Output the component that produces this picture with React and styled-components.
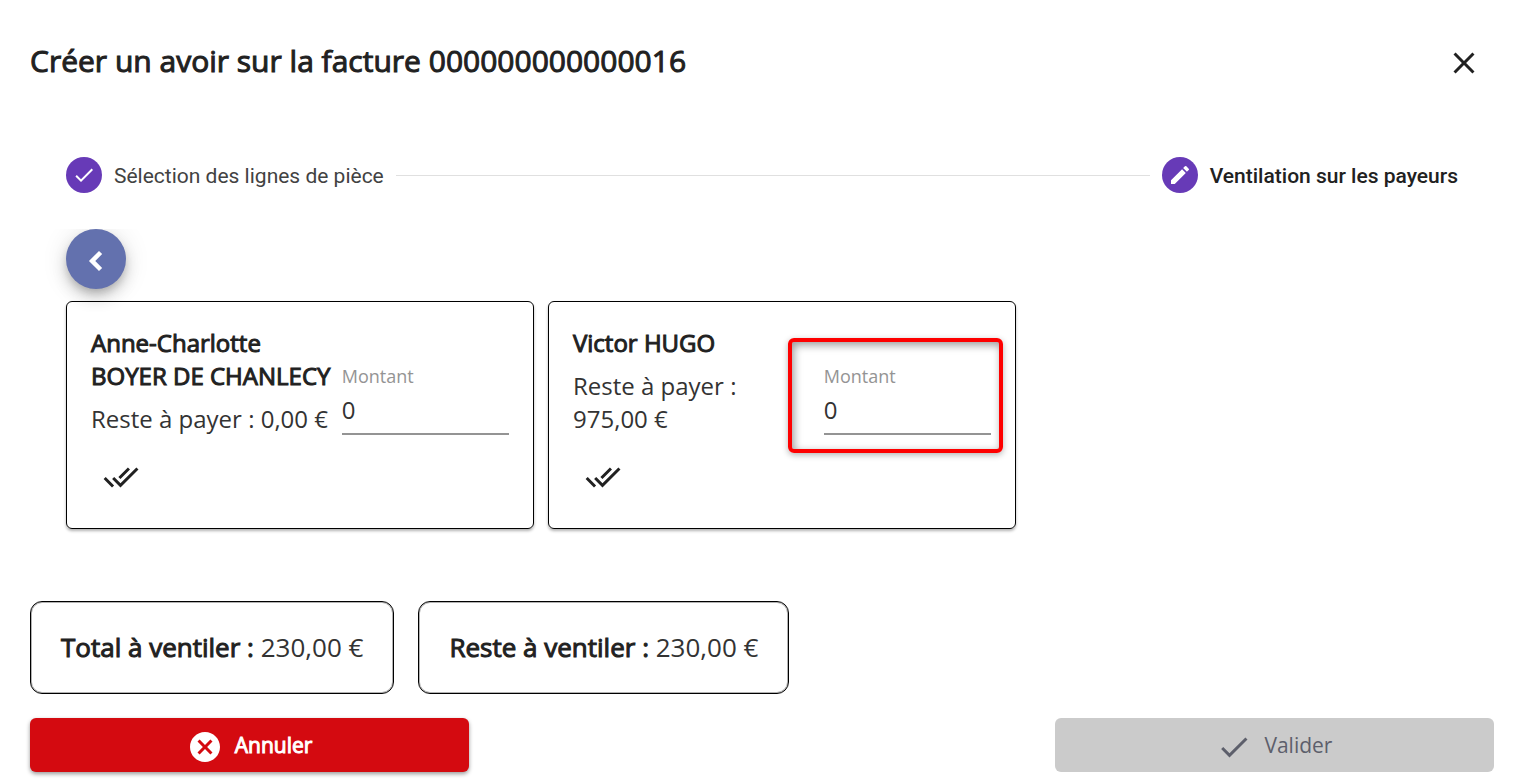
import React, { useState } from 'react';
import styled, { createGlobalStyle } from 'styled-components';
import { MdCancel, MdCheck, MdChevronLeft, MdClose, MdDoneAll, MdEdit } from 'react-icons/md';

const GlobalStyle = createGlobalStyle`
  *, *::before, *::after {
    box-sizing: border-box;
  }

  body {
    margin: 0;
    background: #fff;
    color: #212121;
    font-family: 'Open Sans', 'Noto Sans', sans-serif;
    font-size: 24px;
    font-weight: 400;
    line-height: 33px;
  }

  button,
  input {
    font-family: inherit;
    color: inherit;
  }

  svg {
    display: block;
    flex-shrink: 0;
  }
`;

const Dialog = styled.main`
  padding: 33px 23px 10px 30px;
`;

const DialogHeader = styled.header`
  display: flex;
  align-items: center;
  justify-content: space-between;
  height: 60px;
`;

const Title = styled.h1`
  margin: 0;
  padding-bottom: 4px;
  font-size: 30px;
  font-weight: 400;
  line-height: 42px;
  -webkit-text-stroke: 1px currentColor;
`;

const IconButton = styled.button`
  display: flex;
  align-items: center;
  justify-content: center;
  width: 60px;
  height: 60px;
  padding: 0;
  border: 0;
  border-radius: 50%;
  background: transparent;
  font-size: 36px;
  cursor: pointer;
`;

const Stepper = styled.ol`
  display: flex;
  align-items: center;
  gap: 12px;
  margin: 64px 0 0;
  padding: 0 36px;
  list-style: none;
  font-family: Roboto, sans-serif;
`;

const Step = styled.li`
  display: flex;
  align-items: center;
  gap: 12px;
  height: 36px;
  color: ${({ $active }) => ($active ? '#212121' : '#424242')};
  font-size: 21px;
  font-weight: ${({ $active }) => ($active ? 500 : 400)};
`;

const StepIcon = styled.span`
  display: flex;
  align-items: center;
  justify-content: center;
  width: 36px;
  height: 36px;
  border-radius: 50%;
  background: #673ab7;
  color: #fff;
  font-size: 24px;
`;

const StepLabel = styled.span`
  padding-top: 2px;
  line-height: 24px;
`;

const StepLine = styled.li`
  flex: 1;
  border-top: 1px solid #e0e0e0;
`;

const StepContent = styled.section`
  margin-top: 36px;
  padding: 0 0 36px 36px;
  overflow: hidden;
`;

const BackButton = styled(IconButton)`
  padding-top: 4px;
  background: #6371ae;
  color: #fff;
  box-shadow: 0 5px 8px -2px rgba(0, 0, 0, 0.2), 0 9px 15px rgba(0, 0, 0, 0.14),
    0 2px 27px rgba(0, 0, 0, 0.12);

  path:last-child {
    stroke: currentColor;
    stroke-width: 1px;
  }
`;

const PayerList = styled.div`
  display: flex;
  gap: 14px;
  margin-top: 12px;
`;

const Card = styled.article`
  flex: 0 1 468px;
  padding: 24px 24px 21px;
  border: 1px solid #000;
  border-radius: 6px;
  box-shadow: 0 2px 3px rgba(0, 0, 0, 0.3);
`;

const CardRow = styled.div`
  display: flex;
  align-items: flex-end;
`;

const PayerInfo = styled.div`
  flex: 0 0 60%;
  align-self: flex-start;
`;

const PayerName = styled.h2`
  margin: 0 0 10px;
  font-size: 24px;
  font-weight: 400;
  line-height: 33px;
  -webkit-text-stroke: 1px currentColor;
`;

const Remaining = styled.p`
  margin: 0;
  color: #333;
`;

const Field = styled.div`
  position: relative;
  flex: 1;
  min-width: 0;
  display: flex;
  flex-direction: column;
`;

const FieldLabel = styled.label`
  font-size: 18px;
  line-height: 24px;
  color: #949494;
`;

const FieldInput = styled.input`
  width: 100%;
  height: 47px;
  padding: 0 0 2px;
  border: 0;
  border-bottom: 2px solid #949494;
  border-radius: 0;
  background: transparent;
  color: #333;
  font-size: 24px;
  outline: none;
`;

const Highlight = styled.span`
  position: absolute;
  top: -26px;
  right: -12px;
  bottom: -18px;
  left: -36px;
  border: 4px solid #fe0000;
  border-radius: 6px;
  box-shadow: 0 2px 6px rgba(0, 0, 0, 0.3), inset 2px 3px 9px rgba(0, 0, 0, 0.4);
  pointer-events: none;
`;

const CardActions = styled.div`
  margin-top: 12px;
`;

const Totals = styled.div`
  display: flex;
  gap: 24px;
  margin-top: 36px;
`;

const TotalBox = styled.p`
  margin: 0;
  padding: 27px 30px;
  border: 1px solid #000;
  border-radius: 12px;
  box-shadow: inset 0 0 0 1px rgba(0, 0, 0, 0.3);
  color: #333;
  font-size: 26px;
  line-height: 37px;

  strong {
    color: #212121;
    font-weight: 400;
    -webkit-text-stroke: 1px currentColor;
  }
`;

const Footer = styled.footer`
  display: flex;
  justify-content: space-between;
  margin-top: 24px;
`;

const ActionButton = styled.button`
  display: flex;
  align-items: center;
  justify-content: center;
  gap: 12px;
  width: 30%;
  height: 54px;
  padding: 0;
  border: 0;
  border-radius: 6px;
  background: #d40a10;
  color: #fff;
  font-size: 21px;
  font-weight: 400;
  -webkit-text-stroke: 1px currentColor;
  box-shadow: 0 2px 4px rgba(0, 0, 0, 0.4);
  cursor: pointer;

  svg {
    font-size: 36px;
    margin-top: 4px;
  }

  &:disabled {
    background: #cbcbcb;
    color: #5d5f6b;
    -webkit-text-stroke: 0;
    box-shadow: none;
    cursor: default;
  }
`;

const payers = [
  { id: 1, firstName: 'Anne-Charlotte', lastName: 'BOYER\u00a0DE\u00a0CHANLECY', remaining: '0,00\u00a0€' },
  { id: 2, firstName: 'Victor', lastName: 'HUGO', remaining: '975,00\u00a0€', highlighted: true },
];

const PayerCard = ({ payer }) => {
  const [amount, setAmount] = useState('0');
  const inputId = `montant-${payer.id}`;

  return (
    <Card>
      <CardRow>
        <PayerInfo>
          <PayerName>
            {payer.firstName} {payer.lastName}
          </PayerName>
          <Remaining>Reste à payer : {payer.remaining}</Remaining>
        </PayerInfo>
        <Field>
          <FieldLabel htmlFor={inputId}>Montant</FieldLabel>
          <FieldInput id={inputId} value={amount} onChange={(e) => setAmount(e.target.value)} />
          {payer.highlighted && <Highlight />}
        </Field>
      </CardRow>
      <CardActions>
        <IconButton type="button" aria-label="Tout ventiler">
          <MdDoneAll />
        </IconButton>
      </CardActions>
    </Card>
  );
};

const App = () => {
  return (
    <>
      <GlobalStyle />
      <Dialog>
        <DialogHeader>
          <Title>Créer un avoir sur la facture 000000000000016</Title>
          <IconButton type="button" aria-label="Fermer">
            <MdClose />
          </IconButton>
        </DialogHeader>

        <Stepper>
          <Step>
            <StepIcon>
              <MdCheck />
            </StepIcon>
            <StepLabel>Sélection des lignes de pièce</StepLabel>
          </Step>
          <StepLine role="presentation" />
          <Step $active>
            <StepIcon>
              <MdEdit />
            </StepIcon>
            <StepLabel>Ventilation sur les payeurs</StepLabel>
          </Step>
        </Stepper>

        <StepContent>
          <BackButton type="button" aria-label="Retour">
            <MdChevronLeft />
          </BackButton>
          <PayerList>
            {payers.map((payer) => (
              <PayerCard key={payer.id} payer={payer} />
            ))}
          </PayerList>
        </StepContent>

        <Totals>
          <TotalBox>
            <strong>Total à ventiler :</strong> 230,00 €
          </TotalBox>
          <TotalBox>
            <strong>Reste à ventiler :</strong> 230,00 €
          </TotalBox>
        </Totals>

        <Footer>
          <ActionButton type="button">
            <MdCancel />
            Annuler
          </ActionButton>
          <ActionButton type="button" disabled>
            <MdCheck />
            Valider
          </ActionButton>
        </Footer>
      </Dialog>
    </>
  );
};

export default App;
